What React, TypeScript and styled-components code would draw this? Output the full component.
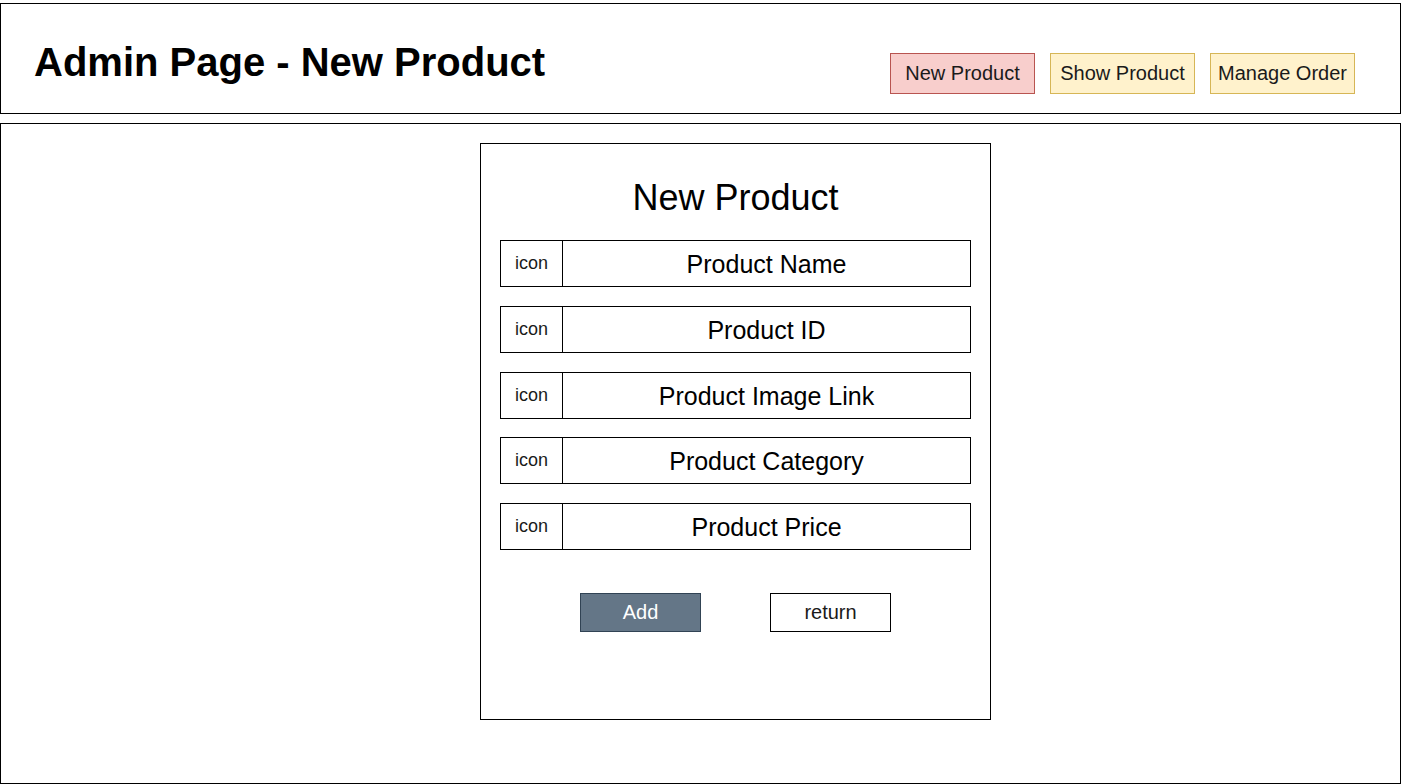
import styled, { createGlobalStyle } from 'styled-components';

const GlobalStyle = createGlobalStyle`
  html, body {
    margin: 0;
    padding: 0;
    background: #ffffff;
    font-family: 'Liberation Sans', Arial, sans-serif;
    color: #000;
  }
  * {
    box-sizing: border-box;
  }
`;

// Page wrapper
const Page = styled.div`
  display: flex;
  flex-direction: column;
  gap: 9px;
  width: 1401px;
  padding-top: 3px;
`;

// Top header bar
const Header = styled.header`
  display: flex;
  justify-content: space-between;
  align-items: flex-start;
  height: 111px;
  border: 1px solid #000;
  padding: 38px 45px 0 33px;
`;

const Title = styled.h1`
  margin: 0;
  font-size: 40px;
  line-height: 40px;
  font-weight: 700;
`;

const Nav = styled.nav`
  display: flex;
  gap: 15px;
  margin-top: 11px;
`;

type Tone = 'red' | 'yellow';

const NavButton = styled.button<{ $tone: Tone }>`
  width: 145px;
  height: 41px;
  padding: 0;
  font-family: inherit;
  font-size: 20px;
  color: #1a1a1a;
  background: ${(p) => (p.$tone === 'red' ? '#f8cecc' : '#fff2cc')};
  border: 1px solid ${(p) => (p.$tone === 'red' ? '#b85450' : '#d6b656')};
  cursor: pointer;
`;

// Main panel
const Panel = styled.main`
  height: 661px;
  border: 1px solid #000;
  padding: 19px 0 0 479px;
`;

const Card = styled.section`
  display: flex;
  flex-direction: column;
  width: 511px;
  height: 577px;
  border: 1px solid #000;
  padding: 32px 19px 0 19px;
`;

const CardTitle = styled.h2`
  margin: 0 0 20px 0;
  font-size: 36px;
  line-height: 44px;
  font-weight: 400;
  text-align: center;
  color: #000;
`;

const Fields = styled.div`
  display: flex;
  flex-direction: column;
  gap: 18.75px;
`;

const Field = styled.div`
  display: flex;
  height: 47px;
  border: 1px solid #000;
`;

const IconCell = styled.div`
  display: flex;
  align-items: center;
  justify-content: center;
  width: 62px;
  border-right: 1px solid #000;
  font-size: 18px;
  color: #1a1a1a;
`;

const FieldLabel = styled.div`
  flex: 1;
  display: flex;
  align-items: center;
  justify-content: center;
  padding-top: 2px;
  font-size: 25px;
  color: #000;
`;

const Actions = styled.div`
  display: flex;
  justify-content: center;
  gap: 69px;
  margin-top: 43px;
`;

const ActionButton = styled.button<{ $primary?: boolean }>`
  width: 121px;
  height: 39px;
  padding: 0;
  font-family: inherit;
  font-size: 20px;
  color: ${(p) => (p.$primary ? '#ffffff' : '#1a1a1a')};
  background: ${(p) => (p.$primary ? '#647687' : '#ffffff')};
  border: 1px solid ${(p) => (p.$primary ? '#314354' : '#000')};
  cursor: pointer;
`;

const fields = [
  'Product Name',
  'Product ID',
  'Product Image Link',
  'Product Category',
  'Product Price',
];

export default function App() {
  return (
    <>
      <GlobalStyle />
      <Page>
        <Header>
          <Title>Admin Page - New Product</Title>
          <Nav>
            <NavButton $tone="red">New Product</NavButton>
            <NavButton $tone="yellow">Show Product</NavButton>
            <NavButton $tone="yellow">Manage Order</NavButton>
          </Nav>
        </Header>
        <Panel>
          <Card>
            <CardTitle>New Product</CardTitle>
            <Fields>
              {fields.map((label) => (
                <Field key={label}>
                  <IconCell>icon</IconCell>
                  <FieldLabel>{label}</FieldLabel>
                </Field>
              ))}
            </Fields>
            <Actions>
              <ActionButton $primary>Add</ActionButton>
              <ActionButton>return</ActionButton>
            </Actions>
          </Card>
        </Panel>
      </Page>
    </>
  );
}
